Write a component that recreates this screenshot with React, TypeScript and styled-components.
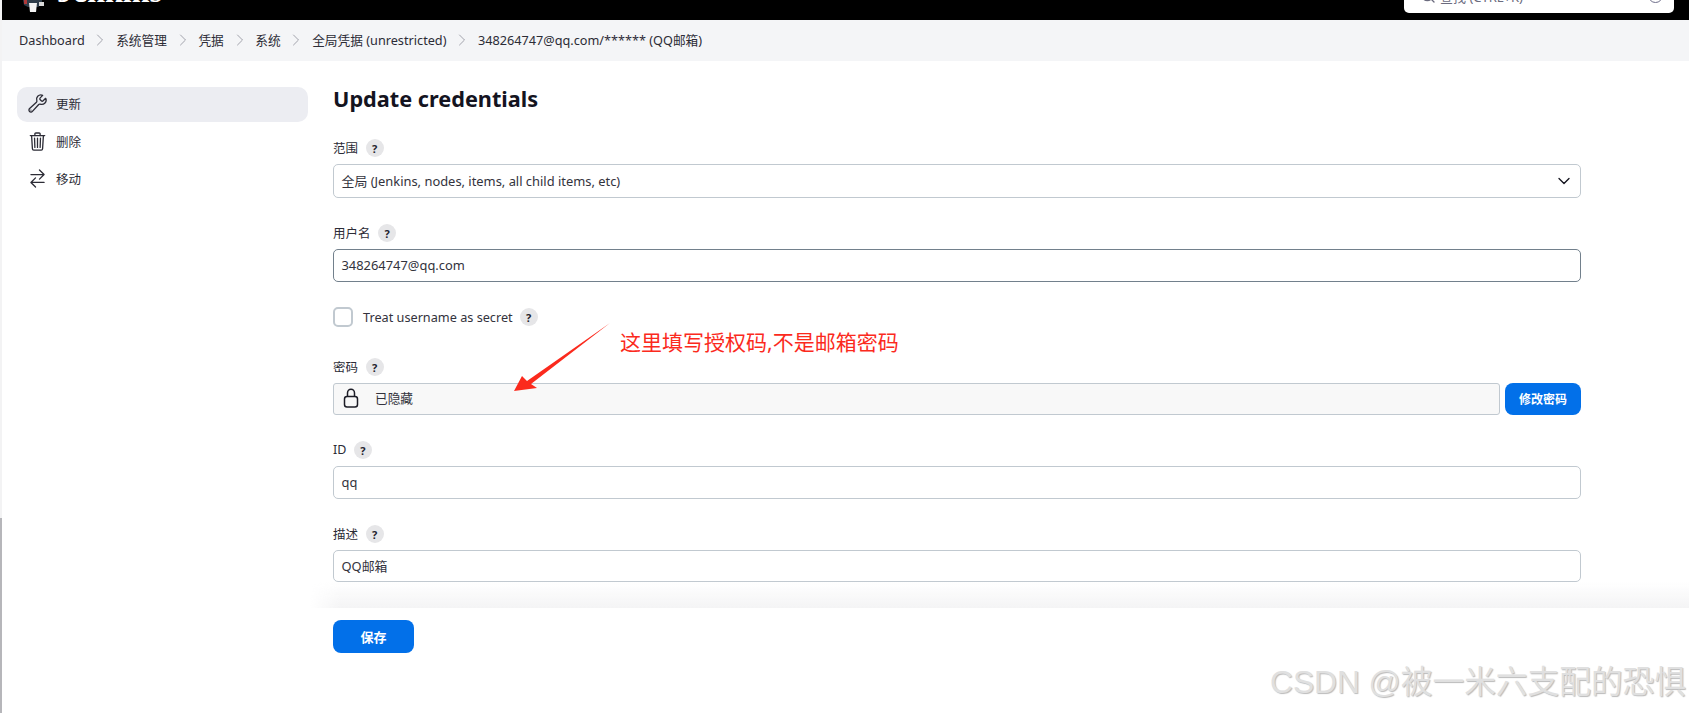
import styled, { createGlobalStyle } from 'styled-components';
import { ChevronDown, ChevronRight, Search } from 'lucide-react';
import { IoBuildOutline, IoTrashOutline, IoSwapHorizontalOutline } from 'react-icons/io5';

const GlobalStyle = createGlobalStyle`
    html, body {
        margin: 0;
        padding: 0;
        background: #fff;
    }
    body {
        font-family: "Noto Sans", "Noto Sans CJK SC", sans-serif;
        color: #14141f;
    }
`;

const Page = styled.div`
    position: relative;
    width: 1689px;
    height: 713px;
    overflow: hidden;
    background: #fff;
`;

const EdgeStrip = styled.div`
    position: absolute;
    left: 0;
    top: 0;
    bottom: 0;
    width: 2px;
    background: linear-gradient(to bottom, #f3f3f4 518px, #b6b6ba 518px);
`;

const Header = styled.header`
    height: 20px;
    background: #000;
    display: flex;
    justify-content: space-between;
    overflow: hidden;
`;

const Brand = styled.div`
    display: flex;
    align-items: flex-start;
    gap: 13px;
    padding-left: 23px;
`;

const BrandName = styled.span`
    font-family: "Liberation Serif", serif;
    font-weight: 700;
    font-size: 32px;
    line-height: 32px;
    margin-top: -25px;
    color: #fff;
`;

const SearchBox = styled.div`
    width: 270px;
    height: 13px;
    margin-right: 15px;
    background: #fff;
    border-radius: 0 0 5px 5px;
    display: flex;
    align-items: flex-end;
    padding: 0 11px 0 16px;
    box-sizing: border-box;
    overflow: hidden;
    color: #6b6b7e;
`;

const SearchIcon = styled(Search)`
    flex: none;
    margin-bottom: 9px;
`;

const SearchText = styled.span`
    flex: 1;
    margin-left: 4px;
    margin-bottom: 8px;
    font-size: 13px;
    line-height: 16px;
    white-space: nowrap;
`;

const SearchHint = styled.span`
    width: 15px;
    height: 15px;
    box-sizing: border-box;
    border: 1.5px solid #6e6e8a;
    border-radius: 50%;
    margin-bottom: 10px;
    flex: none;
`;

const Breadcrumbs = styled.nav`
    height: 41px;
    box-sizing: border-box;
    padding: 0 0 2px 19px;
    background: #f4f5f7;
    display: flex;
    align-items: center;
    font-size: 12.7px;
    color: #2c2c36;
`;

const Crumb = styled.span`
    display: flex;
    align-items: center;
    white-space: nowrap;
`;

const CrumbSep = styled.span`
    display: flex;
    align-items: center;
    justify-content: center;
    width: 31.5px;
    color: #92929c;
`;

const Body = styled.div`
    display: flex;
    padding: 26px 0 0 17px;
`;

const Sidebar = styled.aside`
    width: 291px;
    flex: none;
    display: flex;
    flex-direction: column;
    gap: 2.5px;
`;

const SideItem = styled.div<{ $active?: boolean }>`
    height: 35px;
    box-sizing: border-box;
    padding: 0 0 2px 10px;
    display: flex;
    align-items: center;
    gap: 8px;
    border-radius: 10px;
    font-size: 12.5px;
    color: #2c2c36;
    background: ${({ $active }) => ($active ? '#ecedf2' : 'transparent')};
`;

const Main = styled.main`
    margin-left: 25px;
    width: 1248px;
    flex: none;
`;

const Title = styled.h1`
    margin: -1px 0 0;
    font-size: 21.7px;
    line-height: 26px;
    font-weight: 700;
    color: #14141f;
`;

const Field = styled.div<{ $top: number }>`
    margin-top: ${({ $top }) => $top}px;
`;

const LabelRow = styled.div`
    display: flex;
    align-items: center;
    gap: 7.5px;
    height: 18px;
    margin-bottom: 7px;
    font-size: 12.5px;
    color: #2c2c36;
`;

const LabelText = styled.span`
    margin-bottom: 2px;
`;

const Help = styled.span`
    width: 18px;
    height: 18px;
    border-radius: 50%;
    background: #e6e6e8;
    color: #23232e;
    font-size: 11px;
    font-weight: 700;
    display: flex;
    align-items: center;
    justify-content: center;
    flex: none;
`;

const Input = styled.div<{ $dark?: boolean; $h: number }>`
    height: ${({ $h }) => $h}px;
    box-sizing: border-box;
    border: 1px solid ${({ $dark }) => ($dark ? '#72808c' : '#c1c9d0')};
    border-radius: 5px;
    display: flex;
    align-items: center;
    justify-content: space-between;
    padding: 0 6px 1px 7.5px;
    font-size: 12.9px;
    color: #33333d;
    background: #fff;
`;

const CheckRow = styled.div`
    display: flex;
    align-items: center;
    height: 20px;
    margin-top: 25px;
    font-size: 12.7px;
    color: #33333d;
`;

const CheckBox = styled.span`
    width: 20px;
    height: 20px;
    box-sizing: border-box;
    border: 2px solid #c1c9d0;
    border-radius: 5px;
    margin-right: 10px;
`;

const CheckHelp = styled(Help)`
    margin-left: 7px;
`;

const PasswordRow = styled.div`
    display: flex;
    gap: 5px;
`;

const Hidden = styled.div`
    flex: 1;
    height: 32px;
    box-sizing: border-box;
    background: #f8f8f8;
    border: 1px solid #c1c9d0;
    border-radius: 3px;
    display: flex;
    align-items: center;
    gap: 16px;
    padding: 0 0 3px 9px;
    font-size: 12.7px;
    color: #33333d;
`;

const BlueButton = styled.button<{ $w: number; $h: number; $size: number }>`
    width: ${({ $w }) => $w}px;
    height: ${({ $h }) => $h}px;
    border: 0;
    border-radius: 8px;
    background: #0270e9;
    color: #fff;
    font-family: inherit;
    font-size: ${({ $size }) => $size}px;
    font-weight: 700;
    padding: 0;
    flex: none;
`;

const BottomBar = styled.div`
    position: relative;
    margin-top: 26px;
    padding: 12px 0 0 333px;

    &::before {
        content: '';
        position: absolute;
        left: 310px;
        right: 0;
        top: -26px;
        height: 26px;
        background: linear-gradient(to bottom, rgba(244, 244, 245, 0), #f4f4f5);
        mask-image: linear-gradient(to right, transparent, #000 30px);
    }
`;

const Annotation = styled.span`
    position: absolute;
    left: 620px;
    top: 328px;
    font-size: 21px;
    line-height: 28px;
    color: #fb2a1d;
    white-space: nowrap;
`;

const ArrowSvg = styled.svg`
    position: absolute;
    left: 505px;
    top: 320px;
`;

const Watermark = styled.span`
    position: absolute;
    left: 1270px;
    top: 662px;
    font-family: "Liberation Sans", "Noto Sans CJK SC", sans-serif;
    font-size: 31.7px;
    line-height: 40px;
    color: #e0e0e0;
    text-shadow: 1px 1px 1px #bbb;
    white-space: nowrap;
`;

const crumbs = ['Dashboard', '系统管理', '凭据', '系统', '全局凭据 (unrestricted)', '348264747@qq.com/****** (QQ邮箱)'];

const JenkinsLogo = () => (
    <svg width="21" height="12" viewBox="0 0 21 12">
        <path d="M0 0h19v4l-4 3H5L1 5z" fill="#2f3d4a" />
        <path d="M1 0h3v4H1z" fill="#b03a3a" />
        <path d="M6 3h8l-1 9H7z" fill="#f4f4f4" />
        <path d="M16 2h5v4h-5z" fill="#d8d8d8" />
    </svg>
);

const LockIcon = () => (
    <svg width="16" height="20" viewBox="0 0 16 20" fill="none" stroke="#1c1c26" strokeWidth="1.5">
        <rect x="1.5" y="8.5" width="13" height="10.5" rx="2.5" />
        <path d="M4.5 8.5V5a3.5 3.8 0 0 1 7 0v3.5" />
    </svg>
);

export default function App() {
    return (
        <Page>
            <GlobalStyle />
            <Header>
                <Brand>
                    <JenkinsLogo />
                    <BrandName>Jenkins</BrandName>
                </Brand>
                <SearchBox>
                    <SearchIcon size={16} color="#6b6b7e" />
                    <SearchText>查找 (CTRL+K)</SearchText>
                    <SearchHint />
                </SearchBox>
            </Header>
            <Breadcrumbs>
                {crumbs.map((c, i) => (
                    <Crumb key={c}>
                        {i > 0 && <CrumbSep><ChevronRight size={20} strokeWidth={1} /></CrumbSep>}
                        {c}
                    </Crumb>
                ))}
            </Breadcrumbs>
            <Body>
                <Sidebar>
                    <SideItem $active><IoBuildOutline size={21} color="#2c2c36" />更新</SideItem>
                    <SideItem><IoTrashOutline size={21} color="#2c2c36" />删除</SideItem>
                    <SideItem><IoSwapHorizontalOutline size={21} color="#2c2c36" />移动</SideItem>
                </Sidebar>
                <Main>
                    <Title>Update credentials</Title>
                    <Field $top={27}>
                        <LabelRow><LabelText>范围</LabelText><Help>?</Help></LabelRow>
                        <Input $h={34}>
                            全局 (Jenkins, nodes, items, all child items, etc)
                            <ChevronDown size={20} color="#14141f" strokeWidth={1.6} />
                        </Input>
                    </Field>
                    <Field $top={26}>
                        <LabelRow><LabelText>用户名</LabelText><Help>?</Help></LabelRow>
                        <Input $dark $h={33}>348264747@qq.com</Input>
                    </Field>
                    <CheckRow><CheckBox />Treat username as secret<CheckHelp>?</CheckHelp></CheckRow>
                    <Field $top={31}>
                        <LabelRow><LabelText>密码</LabelText><Help>?</Help></LabelRow>
                        <PasswordRow>
                            <Hidden><LockIcon />已隐藏</Hidden>
                            <BlueButton $w={76} $h={32} $size={12}>修改密码</BlueButton>
                        </PasswordRow>
                    </Field>
                    <Field $top={26}>
                        <LabelRow><LabelText>ID</LabelText><Help>?</Help></LabelRow>
                        <Input $h={33}>qq</Input>
                    </Field>
                    <Field $top={26}>
                        <LabelRow><LabelText>描述</LabelText><Help>?</Help></LabelRow>
                        <Input $h={32}>QQ邮箱</Input>
                    </Field>
                </Main>
            </Body>
            <BottomBar>
                <BlueButton $w={81} $h={33} $size={13}>保存</BlueButton>
            </BottomBar>
            <EdgeStrip />
            <ArrowSvg width="115" height="75" viewBox="0 0 115 75">
                <path d="M105 3 L26 64 L32 68 L9 71 L17 56 L22 61 Z" fill="#fb2a1d" />
            </ArrowSvg>
            <Annotation>这里填写授权码,不是邮箱密码</Annotation>
            <Watermark>CSDN @被一米六支配的恐惧</Watermark>
        </Page>
    );
}
